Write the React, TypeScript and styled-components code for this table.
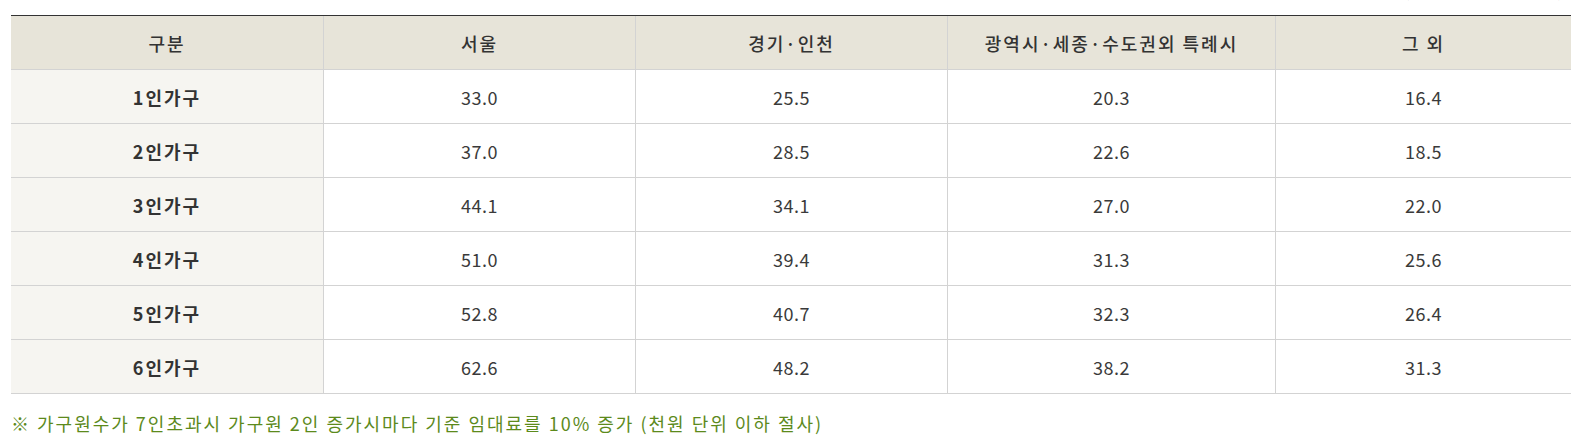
import React from 'react';
import styled, { createGlobalStyle } from 'styled-components';

const GlobalStyle = createGlobalStyle`
  html, body {
    margin: 0;
    padding: 0;
    background: #fff;
    overflow: hidden;
  }
  body {
    font-family: "Noto Sans CJK KR", "Noto Sans", sans-serif;
    color: #333;
  }
`;

const Wrapper = styled.div`
  padding: 0 14px 0 11px;
`;

const Unit = styled.div`
  text-align: right;
  font-size: 17px;
  line-height: 20px;
  height: 20px;
  margin-top: -20px;
  margin-bottom: 15px;
  padding-right: 3px;
  color: #555;
  letter-spacing: 5px;
`;

const Grid = styled.div`
  display: grid;
  grid-template-columns: 312px 312px 312px 328px 1fr;
  grid-auto-rows: 54px;
  border-top: 1px solid #333;
  font-size: 18px;
`;

const Cell = styled.div<{ $variant?: 'head' | 'label' | 'value' }>`
  display: flex;
  align-items: center;
  justify-content: center;
  border-bottom: 1px solid #d3d3d3;
  border-left: 1px solid #d3d3d3;
  letter-spacing: ${({ $variant }) => ($variant === 'value' ? '0.5px' : '2px')};
  font-weight: ${({ $variant }) =>
    $variant === 'label' ? 700 : $variant === 'head' ? 500 : 400};
  background: ${({ $variant }) =>
    $variant === 'head' ? '#e7e4d9' : $variant === 'label' ? '#f6f5f1' : '#fff'};
  color: ${({ $variant }) => ($variant === 'value' ? '#3a3a3a' : '#333')};
  &:nth-child(5n + 1) {
    border-left: none;
  }
`;

const Note = styled.p`
  margin: 17px 0 0;
  font-size: 18px;
  line-height: 24px;
  letter-spacing: 2px;
  color: #5c8a1c;
`;

const columns = ['구분', '서울', '경기·인천', '광역시·세종·수도권외 특례시', '그 외'];

const rows: [string, string[]][] = [
  ['1인가구', ['33.0', '25.5', '20.3', '16.4']],
  ['2인가구', ['37.0', '28.5', '22.6', '18.5']],
  ['3인가구', ['44.1', '34.1', '27.0', '22.0']],
  ['4인가구', ['51.0', '39.4', '31.3', '25.6']],
  ['5인가구', ['52.8', '40.7', '32.3', '26.4']],
  ['6인가구', ['62.6', '48.2', '38.2', '31.3']],
];

export default function App() {
  return (
    <>
      <GlobalStyle />
      <Wrapper>
        <Unit>(단위 : 만원/월)</Unit>
        <Grid>
          {columns.map((c) => (
            <Cell key={c} $variant="head">
              {c}
            </Cell>
          ))}
          {rows.map(([label, values]) => (
            <React.Fragment key={label}>
              <Cell $variant="label">{label}</Cell>
              {values.map((v, i) => (
                <Cell key={i} $variant="value">
                  {v}
                </Cell>
              ))}
            </React.Fragment>
          ))}
        </Grid>
        <Note>※ 가구원수가 7인초과시 가구원 2인 증가시마다 기준 임대료를 10% 증가 (천원 단위 이하 절사)</Note>
      </Wrapper>
    </>
  );
}
